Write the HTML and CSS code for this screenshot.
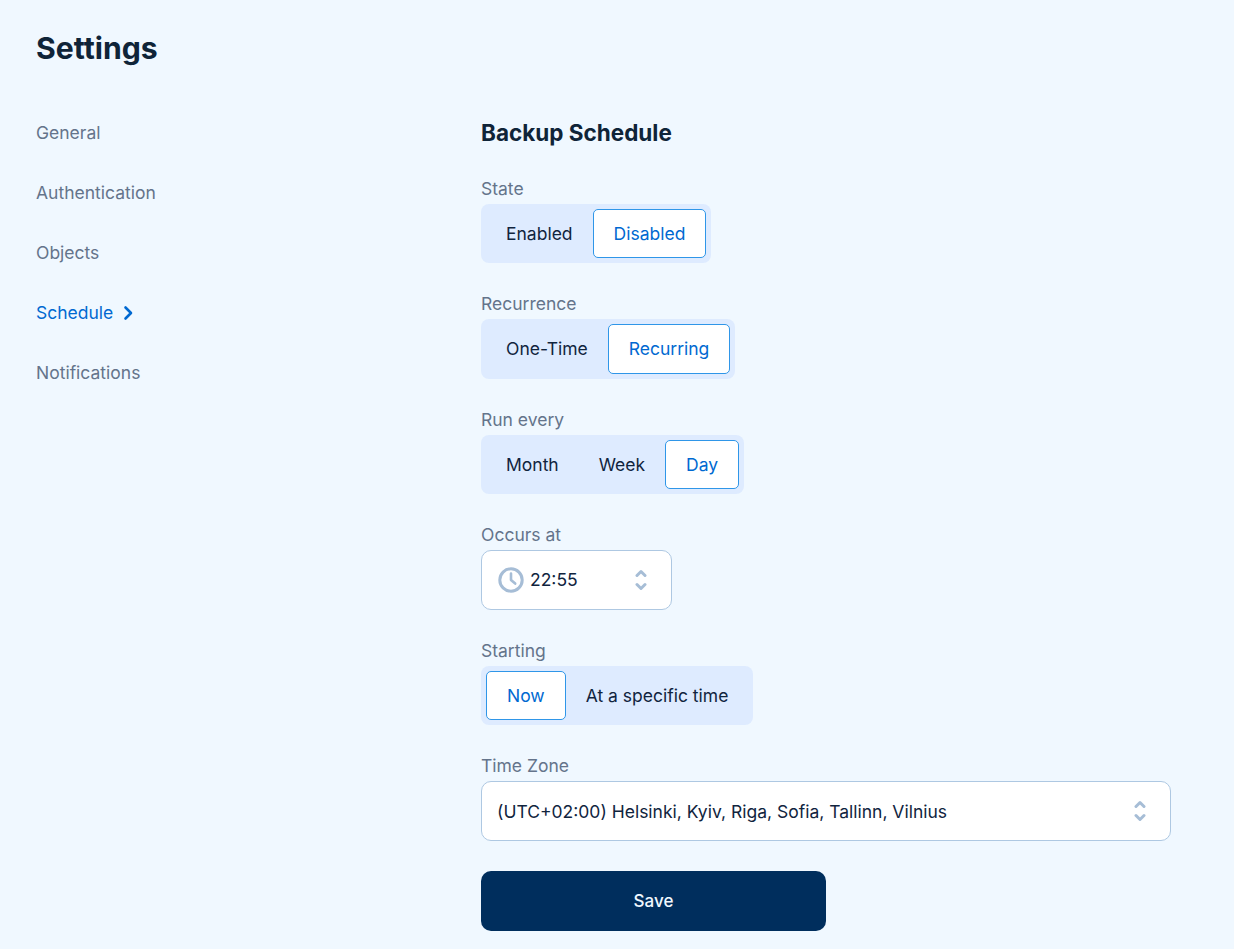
FILE: index.html
```html
<!DOCTYPE html>
<html lang="en">
<head>
<meta charset="utf-8">
<title>Settings</title>
<link rel="stylesheet" href="styles.css">
</head>
<body>
<div class="page">
  <h1 class="page-title">Settings</h1>
  <div class="layout">
    <nav class="side-nav">
      <a class="nav-item">General</a>
      <a class="nav-item">Authentication</a>
      <a class="nav-item">Objects</a>
      <a class="nav-item active">Schedule
        <svg class="nav-chevron" width="10" height="16" viewBox="0 0 10 16" fill="none"><path d="M2.500 2.500 8 8 2.500 13.500" stroke="currentColor" stroke-width="2.600" stroke-linecap="round" stroke-linejoin="round"/></svg>
      </a>
      <a class="nav-item">Notifications</a>
    </nav>
    <main class="content">
      <h2 class="section-title">Backup Schedule</h2>
      <div class="field">
        <div class="field-label">State</div>
        <div class="segmented"><span class="seg">Enabled</span><span class="seg selected">Disabled</span></div>
      </div>
      <div class="field">
        <div class="field-label">Recurrence</div>
        <div class="segmented"><span class="seg">One-Time</span><span class="seg selected">Recurring</span></div>
      </div>
      <div class="field">
        <div class="field-label">Run every</div>
        <div class="segmented"><span class="seg">Month</span><span class="seg">Week</span><span class="seg selected">Day</span></div>
      </div>
      <div class="field">
        <div class="field-label">Occurs at</div>
        <div class="input time-input">
          <svg class="clock" width="26" height="26" viewBox="0 0 26 26" fill="none"><circle cx="13" cy="13" r="11.200" stroke="currentColor" stroke-width="3"/><path d="M13 6.500V13l4.200 3.600" stroke="currentColor" stroke-width="2.600" stroke-linecap="round" stroke-linejoin="round"/></svg>
          <span class="input-value">22:55</span>
          <svg class="updown" width="12" height="22" viewBox="0 0 12 22" fill="none"><path d="M2 6.500 6 2.500 10 6.500M2 15.500 6 19.500 10 15.500" stroke="currentColor" stroke-width="3" stroke-linecap="round" stroke-linejoin="round"/></svg>
        </div>
      </div>
      <div class="field">
        <div class="field-label">Starting</div>
        <div class="segmented"><span class="seg selected">Now</span><span class="seg">At a specific time</span></div>
      </div>
      <div class="field">
        <div class="field-label">Time Zone</div>
        <div class="input zone-input">
          <span class="input-value">(UTC+02:00) Helsinki, Kyiv, Riga, Sofia, Tallinn, Vilnius</span>
          <svg class="updown" width="12" height="22" viewBox="0 0 12 22" fill="none"><path d="M2 6.500 6 2.500 10 6.500M2 15.500 6 19.500 10 15.500" stroke="currentColor" stroke-width="3" stroke-linecap="round" stroke-linejoin="round"/></svg>
        </div>
      </div>
      <button class="save" type="button">Save</button>
    </main>
  </div>
</div>
</body>
</html>
```
FILE: styles.css
```css
* { box-sizing: border-box; }
html, body { margin: 0; height: 100%; }
body {
  background: #f0f8ff;
  font-family: Inter, "Noto Sans", sans-serif;
  font-size: 17.5px;
  line-height: 25.6px;
  color: #10243e;
  overflow: hidden;
}
.page { padding: 24px 63px 0 36px; }
.page-title {
  margin: 0 0 36px;
  font-size: 30.2px;
  line-height: 48px;
  font-weight: 700;
  color: #0f2438;
}
.layout { display: flex; }
.side-nav { width: 445px; flex: none; display: flex; flex-direction: column; gap: 34.4px; padding-top: 12px; }
.nav-item { display: flex; align-items: center; color: #64748b; }
.nav-item.active { color: #0069d1; }
.nav-chevron { margin-left: 10px; }
.content { flex: 1; min-width: 0; }
.section-title {
  margin: 0 0 25.85px;
  padding-top: 8px;
  font-size: 22.5px;
  line-height: 34px;
  font-weight: 700;
  color: #0f2438;
}
.field { margin-bottom: 27.8px; }
.field-label { color: #64748b; height: 28px; }
.segmented {
  display: inline-flex;
  vertical-align: top;
  padding: 5px;
  background: #deebff;
  border-radius: 8px;
}
.seg {
  padding: 12px 20px;
  border-radius: 5px;
  color: #10243e;
}
.seg.selected {
  padding: 11px 20px;
  background: #fff;
  border: 1px solid #2f96e8;
  color: #0069d1;
}
.input {
  display: flex;
  align-items: center;
  height: 60px;
  background: #fff;
  border: 1px solid #aec8e2;
  border-radius: 10px;
  color: #10243e;
}
.time-input { width: 191px; padding: 0 24px 0 16px; }
.zone-input { justify-content: space-between; padding: 0 24px 0 15px; }
.zone-input .input-value { padding-top: 1px; }
.clock { color: #a6bdd6; margin-right: 6px; flex: none; }
.time-input .input-value { flex: 1; }
.updown { color: #a6bdd6; flex: none; }
.save {
  display: block;
  width: 345px;
  height: 60px;
  margin-top: 30px;
  border: 0;
  border-radius: 10px;
  background: #002e5d;
  color: #f0f8ff;
  font: 500 17px Inter, "Noto Sans", sans-serif;
}
.field:last-of-type { margin-bottom: 0; }
```
